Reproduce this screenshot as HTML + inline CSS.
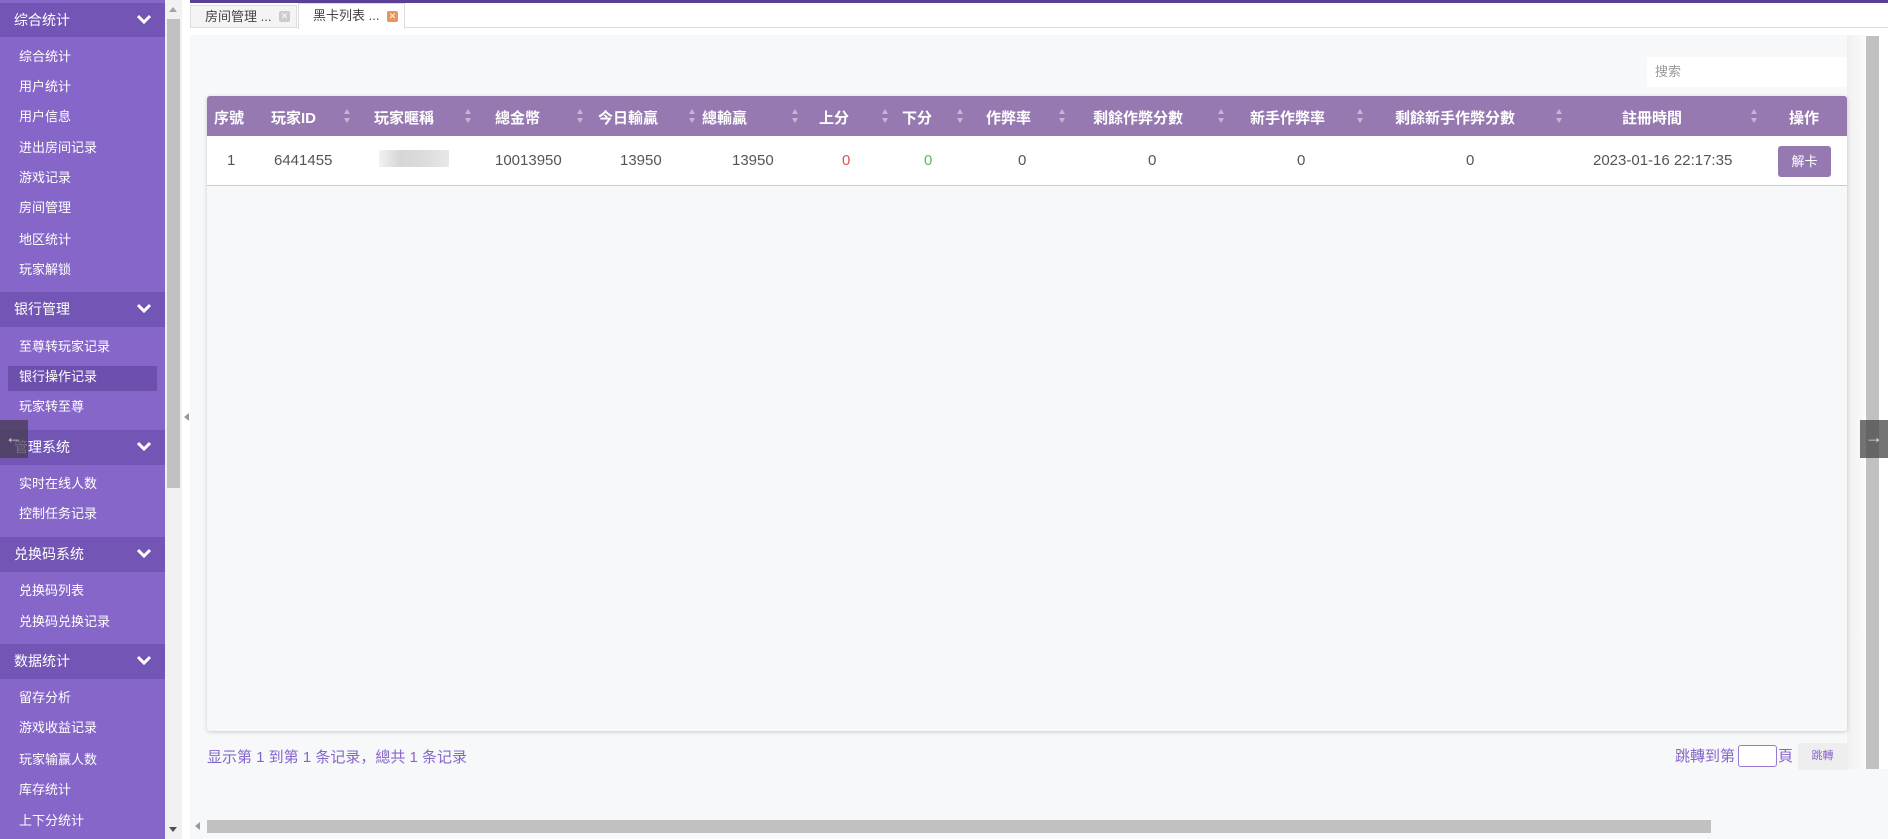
<!DOCTYPE html>
<html><head><meta charset="utf-8"><style>
*{margin:0;padding:0;box-sizing:border-box}
body{width:1888px;height:839px;overflow:hidden;background:#fff;font-family:"Liberation Sans","Noto Sans CJK SC",sans-serif;position:relative}
.a{position:absolute;white-space:nowrap}
#sb{left:0;top:0;width:165px;height:839px;background:#8766c9}
.g{left:0;width:165px;height:35px;background:#7255b5;color:#fff;font-size:14px;line-height:35px;padding-left:14px}
.g svg{position:absolute;left:137px;top:11px}
.it{left:19px;color:#fff;font-size:13px;line-height:16px}
.h{color:#fff;font-weight:bold;font-size:15px;top:107px}
.d{color:#555;font-size:15px;top:152px}
</style></head><body>
<div class="a" style="left:0;top:0;width:1888px;height:3px;background:#5a3f96"></div>
<div class="a" id="sb"></div>
<div class="a g" style="top:3px;height:34px;line-height:34px">综合统计<svg width="14" height="10"><path d="M1 2l6 6 6-6" stroke="#fff" stroke-width="3" fill="none"/></svg></div>
<div class="a it" style="top:49px">综合统计</div>
<div class="a it" style="top:79px">用户统计</div>
<div class="a it" style="top:109px">用户信息</div>
<div class="a it" style="top:140px">进出房间记录</div>
<div class="a it" style="top:170px">游戏记录</div>
<div class="a it" style="top:200px">房间管理</div>
<div class="a it" style="top:232px">地区统计</div>
<div class="a it" style="top:262px">玩家解锁</div>
<div class="a g" style="top:292px">银行管理<svg width="14" height="10"><path d="M1 2l6 6 6-6" stroke="#fff" stroke-width="3" fill="none"/></svg></div>
<div class="a it" style="top:339px">至尊转玩家记录</div>
<div class="a" style="left:8px;top:366px;width:149px;height:25px;background:#6d4fae"></div>
<div class="a it" style="top:369px">银行操作记录</div>
<div class="a it" style="top:399px">玩家转至尊</div>
<div class="a g" style="top:430px">管理系统<svg width="14" height="10"><path d="M1 2l6 6 6-6" stroke="#fff" stroke-width="3" fill="none"/></svg></div>
<div class="a it" style="top:476px">实时在线人数</div>
<div class="a it" style="top:506px">控制任务记录</div>
<div class="a g" style="top:537px">兑换码系统<svg width="14" height="10"><path d="M1 2l6 6 6-6" stroke="#fff" stroke-width="3" fill="none"/></svg></div>
<div class="a it" style="top:583px">兑换码列表</div>
<div class="a it" style="top:614px">兑换码兑换记录</div>
<div class="a g" style="top:644px">数据统计<svg width="14" height="10"><path d="M1 2l6 6 6-6" stroke="#fff" stroke-width="3" fill="none"/></svg></div>
<div class="a it" style="top:690px">留存分析</div>
<div class="a it" style="top:720px">游戏收益记录</div>
<div class="a it" style="top:752px">玩家输赢人数</div>
<div class="a it" style="top:782px">库存统计</div>
<div class="a it" style="top:813px">上下分统计</div>
<div class="a" style="left:0;top:420px;width:28px;height:38px;background:rgba(70,60,80,.75);color:#ccc;font-size:18px;line-height:34px;text-align:center">←</div>
<div class="a" style="left:165px;top:0;width:17px;height:839px;background:#f1f1f1"></div>
<div class="a" style="left:167px;top:19px;width:13px;height:469px;background:#c1c1c1"></div>
<div class="a" style="left:169px;top:7px;border:4px solid transparent;border-bottom:5px solid #a3a3a3;border-top:0"></div>
<div class="a" style="left:169px;top:827px;border:4px solid transparent;border-top:5px solid #505050;border-bottom:0"></div>
<div class="a" style="left:182px;top:0;width:8px;height:839px;background:#fff"></div>
<div class="a" style="left:184px;top:413px;border:4px solid transparent;border-right:5px solid #999;border-left:0"></div>
<div class="a" style="left:190px;top:3px;width:1698px;height:25px;border-bottom:1px solid #ddd;background:#fff"></div>
<div class="a" style="left:190px;top:5px;width:107px;height:23px;border:1px solid #ddd;background:#f4f4f4;font-size:13px;color:#444;line-height:21px;padding-left:14px">房间管理 ...<span style="position:absolute;left:88px;top:5px;width:11px;height:11px;background:#ccc;border-radius:2px;color:#fff;font-size:9px;line-height:11px;text-align:center">✕</span></div>
<div class="a" style="left:298px;top:3px;width:107px;height:26px;border:1px solid #ddd;border-bottom:0;background:#fff;font-size:13px;color:#444;line-height:24px;padding-left:14px">黑卡列表 ...<span style="position:absolute;left:88px;top:7px;width:11px;height:11px;background:#e9945e;border-radius:2px;color:#fff;font-size:9px;line-height:11px;text-align:center">✕</span></div>
<div class="a" style="left:190px;top:35px;width:1657px;height:780px;background:#f7f8fa"></div>
<div class="a" style="left:1847px;top:35px;width:18px;height:735px;background:linear-gradient(90deg,#f0f0f0,#fafafa)"></div>
<div class="a" style="left:1866px;top:36px;width:13px;height:734px;background:#c1c1c1"></div>
<div class="a" style="left:1711px;top:769px;width:177px;height:70px;background:#f7f8fa"></div>
<div class="a" style="left:1860px;top:420px;width:28px;height:38px;background:rgba(70,70,70,.75);color:#ddd;font-size:18px;line-height:34px;text-align:center">→</div>
<div class="a" style="left:1647px;top:57px;width:200px;height:30px;background:#fff;border-radius:3px;color:#999;font-size:13px;line-height:30px;padding-left:8px">搜索</div>
<div class="a" style="left:207px;top:96px;width:1640px;height:635px;background:#f7f8fa;box-shadow:0 1px 4px rgba(0,0,0,.18);border-radius:3px"></div>
<div class="a" style="left:207px;top:96px;width:1640px;height:40px;background:#9779b1;border-radius:3px 3px 0 0"></div>
<div class="a" style="left:207px;top:136px;width:1640px;height:50px;background:#fff;border-bottom:1px solid #ccc"></div>
<div class="a h" style="left:214px">序號</div>
<div class="a h" style="left:271px">玩家ID</div>
<div class="a h" style="left:374px">玩家暱稱</div>
<div class="a h" style="left:495px">總金幣</div>
<div class="a h" style="left:598px">今日輸贏</div>
<div class="a h" style="left:702px">總輸贏</div>
<div class="a h" style="left:819px">上分</div>
<div class="a h" style="left:902px">下分</div>
<div class="a h" style="left:986px">作弊率</div>
<div class="a h" style="left:1093px">剩餘作弊分數</div>
<div class="a h" style="left:1250px">新手作弊率</div>
<div class="a h" style="left:1395px">剩餘新手作弊分數</div>
<div class="a h" style="left:1622px">註冊時間</div>
<div class="a h" style="left:1789px">操作</div>
<svg class="a" style="left:0;top:0" width="1888" height="140"><g fill="#c4b6d6">
<path d="M344 114l3-5 3 5zM344 118l3 5 3-5z"/><path d="M465 114l3-5 3 5zM465 118l3 5 3-5z"/><path d="M577 114l3-5 3 5zM577 118l3 5 3-5z"/><path d="M689 114l3-5 3 5zM689 118l3 5 3-5z"/><path d="M792 114l3-5 3 5zM792 118l3 5 3-5z"/><path d="M882 114l3-5 3 5zM882 118l3 5 3-5z"/><path d="M957 114l3-5 3 5zM957 118l3 5 3-5z"/><path d="M1059 114l3-5 3 5zM1059 118l3 5 3-5z"/><path d="M1218 114l3-5 3 5zM1218 118l3 5 3-5z"/><path d="M1357 114l3-5 3 5zM1357 118l3 5 3-5z"/><path d="M1556 114l3-5 3 5zM1556 118l3 5 3-5z"/><path d="M1751 114l3-5 3 5zM1751 118l3 5 3-5z"/></g></svg>
<div class="a d" style="left:227px">1</div>
<div class="a d" style="left:274px">6441455</div>
<div class="a" style="left:379px;top:150px;width:70px;height:17px;background:linear-gradient(90deg,#f2f2f2,#d6d6d6 30%,#ddd 70%,#e8e8e8)"></div>
<div class="a d" style="left:495px">10013950</div>
<div class="a d" style="left:620px">13950</div>
<div class="a d" style="left:732px">13950</div>
<div class="a d" style="left:842px;color:#d9534f">0</div>
<div class="a d" style="left:924px;color:#5cb85c">0</div>
<div class="a d" style="left:1018px">0</div>
<div class="a d" style="left:1148px">0</div>
<div class="a d" style="left:1297px">0</div>
<div class="a d" style="left:1466px">0</div>
<div class="a d" style="left:1593px">2023-01-16 22:17:35</div>
<div class="a" style="left:1778px;top:146px;width:53px;height:31px;background:#9779b1;border-radius:3px;color:#fff;font-size:13px;line-height:31px;text-align:center">解卡</div>
<div class="a" style="left:207px;top:746px;color:#8766c9;font-size:15px">显示第 1 到第 1 条记录，總共 1 条记录</div>
<div class="a" style="left:1675px;top:745px;color:#8766c9;font-size:15px">跳轉到第</div>
<div class="a" style="left:1738px;top:745px;width:39px;height:22px;border:1px solid #9779d1;border-radius:3px;background:#fff"></div>
<div class="a" style="left:1778px;top:745px;color:#8766c9;font-size:15px">頁</div>
<div class="a" style="left:1798px;top:743px;width:49px;height:27px;background:#eee;border-radius:2px;color:#8766c9;font-size:11px;line-height:27px;text-align:center">跳轉</div>
<div class="a" style="left:190px;top:815px;width:1521px;height:24px;background:#f7f8fa"></div>
<div class="a" style="left:207px;top:820px;width:1504px;height:13px;background:#c1c1c1"></div>
<div class="a" style="left:195px;top:822px;border:4px solid transparent;border-right:5px solid #999;border-left:0"></div>
</body></html>
